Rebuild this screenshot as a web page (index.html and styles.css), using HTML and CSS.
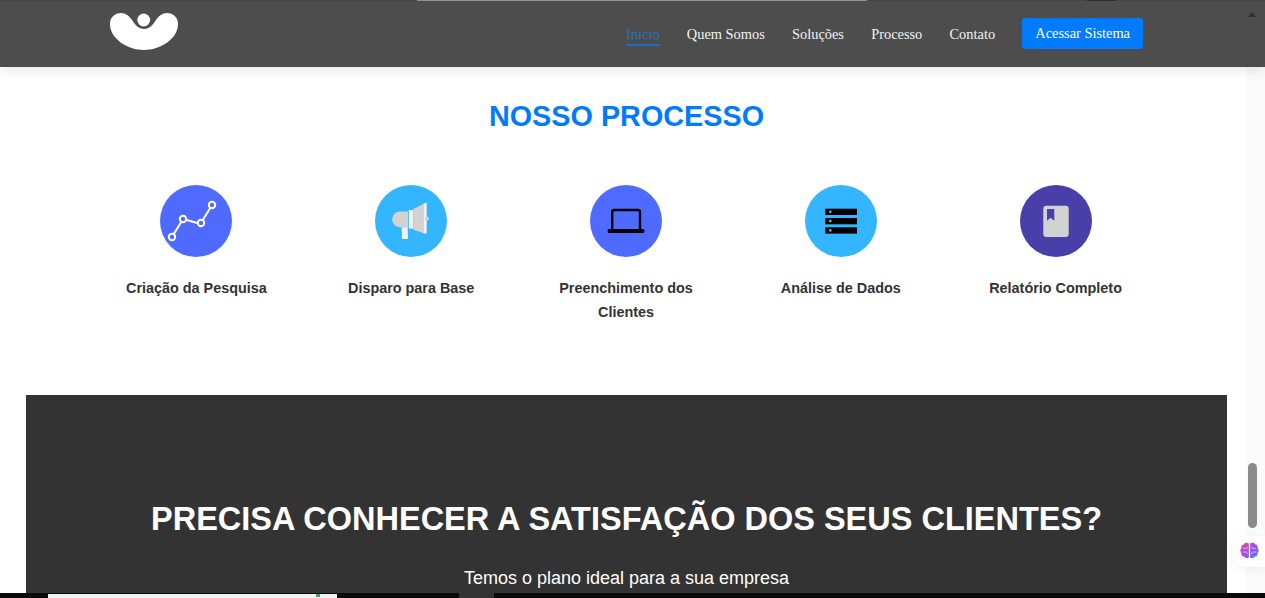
FILE: index.html
```html
<!DOCTYPE html>
<html lang="pt-BR">
<head>
<meta charset="utf-8">
<title>Nosso Processo</title>
<link rel="stylesheet" href="styles.css">
</head>
<body>
<header class="site-header">
  <div class="top-strip"><span class="strip-light"></span><span class="strip-dark"></span></div>
  <div class="header-inner">
    <a class="logo" href="#" aria-label="Logo">
      <svg width="68" height="37" viewBox="0 0 68 37"><circle cx="33.7" cy="7" r="6.4" fill="#fff"/><path fill="#fff" d="M0 11C0 4 5 0 11 0C16 0 19 3 22 7C25 12 29 16 34 16C39 16 43 12 46 7C49 3 52 0 57 0C63 0 68 4 68 11C68 26 50 37 34 37C18 37 0 26 0 11Z"/></svg>
    </a>
    <nav class="nav">
      <a class="nav-link active" href="#">Início</a>
      <a class="nav-link" href="#">Quem Somos</a>
      <a class="nav-link" href="#">Soluções</a>
      <a class="nav-link" href="#">Processo</a>
      <a class="nav-link" href="#">Contato</a>
      <a class="nav-btn" href="#">Acessar Sistema</a>
    </nav>
  </div>
</header>

<main class="page">
  <section class="process">
    <h2 class="process-title">NOSSO PROCESSO</h2>
    <div class="steps">
      <div class="step">
        <div class="step-icon indigo">
          <svg width="72" height="72" viewBox="0 0 72 72" fill="none" stroke="#fff" stroke-width="2"><path d="M13.5 49.5L21.5 36.5M25.8 34.8L38 38.3M42.5 35.5L50.5 22.5"/><circle cx="12" cy="52" r="3.2"/><circle cx="23" cy="34" r="3.2"/><circle cx="41" cy="38" r="3.2"/><circle cx="52" cy="20" r="3.2"/></svg>
        </div>
        <h3 class="step-label">Criação da Pesquisa</h3>
      </div>
      <div class="step">
        <div class="step-icon sky">
          <svg width="72" height="72" viewBox="0 0 72 72"><path fill="#d2d2d2" d="M33 26.5H25A7.8 7.8 0 0 0 25 42.2H33Z"/><rect x="33.8" y="25" width="4.6" height="18.6" fill="#f1f1f1"/><path fill="#d2d2d2" d="M38.4 24L48.4 19V48L38.4 44.8Z"/><path fill="#f1f1f1" d="M48.4 18.5L51.7 17.5V48.5H48.4Z"/><circle cx="52" cy="33.5" r="2" fill="#d2d2d2"/><path fill="#f1f1f1" d="M26.7 42.2H32.7L33 54H27Z"/></svg>
        </div>
        <h3 class="step-label">Disparo para Base</h3>
      </div>
      <div class="step">
        <div class="step-icon indigo">
          <svg width="72" height="72" viewBox="0 0 72 72"><path fill="none" stroke="#000" stroke-width="2.4" d="M22.2 45V27A2 2 0 0 1 24.2 25H48A2 2 0 0 1 50 27V45"/><rect x="17.7" y="44" width="36.6" height="4" rx="1"/></svg>
        </div>
        <h3 class="step-label">Preenchimento dos<br>Clientes</h3>
      </div>
      <div class="step">
        <div class="step-icon sky">
          <svg width="72" height="72" viewBox="0 0 72 72"><rect x="20.3" y="23.7" width="31.7" height="6.3"/><rect x="20.3" y="33" width="31.7" height="6.3"/><rect x="20.3" y="42.3" width="31.7" height="6.3"/><g fill="#5cc4ff"><circle cx="25.3" cy="26.8" r="1.3"/><circle cx="25.3" cy="36.1" r="1.3"/><circle cx="25.3" cy="45.4" r="1.3"/></g></svg>
        </div>
        <h3 class="step-label">Análise de Dados</h3>
      </div>
      <div class="step">
        <div class="step-icon violet">
          <svg width="72" height="72" viewBox="0 0 72 72"><rect x="23.3" y="20.7" width="25.4" height="31.3" rx="3" fill="#d2d2d2"/><path fill="#4a3fa8" d="M27 24H34.3V35.7L30.6 32.8L27 35.7Z"/></svg>
        </div>
        <h3 class="step-label">Relatório Completo</h3>
      </div>
    </div>
  </section>

  <section class="cta">
    <h2 class="cta-title">PRECISA CONHECER A SATISFAÇÃO DOS SEUS CLIENTES?</h2>
    <p class="cta-text">Temos o plano ideal para a sua empresa</p>
  </section>
</main>

<div class="rail">
  <span class="rail-arrow"></span>
  <span class="rail-thumb"></span>
</div>

<div class="brain-widget">
  <svg width="19" height="18" viewBox="0 0 18 17">
    <defs><linearGradient id="brain" x1="0" y1="0" x2="1" y2="1"><stop offset="0" stop-color="#f0468c"/><stop offset=".5" stop-color="#9a4ff0"/><stop offset="1" stop-color="#3f8dff"/></linearGradient></defs>
    <path fill="url(#brain)" d="M8.4 1.5C7 .2 4.6.4 3.8 2C2 2.2.9 3.8 1.4 5.4C0 6.6 0 9.2 1.3 10.3C1 12.2 2.2 13.8 4 13.8C4.8 15.6 7.3 16 8.4 14.6ZM9.6 1.5C11 .2 13.4.4 14.2 2C16 2.2 17.1 3.8 16.6 5.4C18 6.6 18 9.2 16.7 10.3C17 12.2 15.8 13.8 14 13.8C13.2 15.6 10.7 16 9.6 14.6Z"/>
    <path fill="none" stroke="#fff" stroke-opacity=".75" stroke-width=".7" d="M3 6H6.5L7.5 4.5M2.5 9.5H6L7.5 11.5M15 6H11.5L10.5 4.5M15.5 9.5H12L10.5 11.5"/>
  </svg>
</div>

<div class="taskbar">
  <div class="task-window"><span class="task-mark"></span></div>
  <span class="task-tab"></span>
</div>
</body>
</html>
```

FILE: styles.css
```css
* { box-sizing: border-box; }

html, body {
  margin: 0;
  height: 598px;
  overflow: hidden;
  background: #fff;
}

body {
  position: relative;
  font-family: "Liberation Sans", Arial, sans-serif;
  color: #333;
}

.site-header {
  height: 67px;
  background: #4d4d4d;
  box-shadow: 0 3px 12px rgba(0, 0, 0, .1);
  position: relative;
  z-index: 2;
}

.top-strip {
  height: 1px;
  background: #3d474f;
  position: relative;
}

.strip-light {
  position: absolute;
  left: 417px;
  width: 450px;
  top: 0;
  height: 1px;
  background: #8d9296;
}

.strip-dark {
  position: absolute;
  left: 1087px;
  width: 28px;
  top: 0;
  height: 1px;
  background: #2a2d30;
}

.header-inner {
  width: 1253px;
  height: 66px;
  padding: 0 110px;
  display: flex;
  align-items: flex-start;
  justify-content: space-between;
}

.logo {
  display: block;
  margin-top: 12px;
  height: 37px;
}

.nav {
  display: flex;
  align-items: flex-start;
  font-family: "Liberation Serif", "Times New Roman", serif;
  font-size: 14.4px;
  line-height: 20px;
  margin-top: 17px;
}

.nav-link {
  color: #f2f2f2;
  text-decoration: none;
  margin-right: 27.2px;
  margin-top: 6px;
  border-bottom: 2px solid transparent;
}

.nav-link.active {
  color: #2a70bd;
  border-bottom-color: #1f6cc4;
}

.nav-btn {
  display: block;
  height: 31px;
  padding: 5px 13px;
  line-height: 21px;
  background: #007bff;
  color: #fff;
  border-radius: 3px;
  text-decoration: none;
}

.page {
  width: 1253px;
}

.process {
  padding: 32px 0 0;
}

.process-title {
  margin: 0;
  text-align: center;
  color: #007bff;
  font-size: 28.8px;
  line-height: 34px;
  font-weight: 700;
}

.steps {
  width: 1074px;
  margin: 52px 0 0 89px;
  display: grid;
  grid-template-columns: repeat(5, 1fr);
  height: 210px;
}

.step {
  display: flex;
  flex-direction: column;
  align-items: center;
  text-align: center;
}

.step-icon {
  width: 72px;
  height: 72px;
  border-radius: 50%;
}

.step-icon svg {
  display: block;
}

.indigo { background: #4f6bff; }
.sky { background: #33b5ff; }
.violet { background: #4a3fa8; }

.step-label {
  margin: 19px 0 0;
  font-size: 14.4px;
  line-height: 24px;
  font-weight: 700;
  color: #333;
}

.cta {
  margin: 0 26px;
  height: 240px;
  background: #333;
  color: #fff;
  text-align: center;
  padding-top: 104px;
}

.cta-title {
  margin: 0;
  font-size: 32.5px;
  line-height: 40px;
  font-weight: 700;
}

.cta-text {
  margin: 28px 0 0;
  font-size: 18px;
  line-height: 22px;
}

.rail {
  position: absolute;
  top: 67px;
  right: 0;
  bottom: 0;
  width: 19px;
  background: #fafafa;
}

.rail-arrow {
  position: absolute;
  top: -55px;
  left: 2px;
  width: 0;
  height: 0;
  border-left: 4.5px solid transparent;
  border-right: 4.5px solid transparent;
  border-bottom: 5px solid #2f2f2f;
  z-index: 3;
}

.rail-thumb {
  position: absolute;
  top: 396px;
  left: 2px;
  width: 9px;
  height: 65px;
  border-radius: 5px;
  background: #8a8a8a;
}

.brain-widget {
  position: absolute;
  left: 1232px;
  top: 536px;
  width: 33px;
  height: 31px;
  padding: 6px 0 0 8px;
  background: #fff;
  border-radius: 16px 0 0 16px;
  box-shadow: 0 2px 8px rgba(0, 0, 0, .06);
}

.brain-widget svg {
  display: block;
}

.taskbar {
  position: absolute;
  left: 0;
  right: 0;
  bottom: 0;
  height: 5px;
  background: #0a0a0a;
  z-index: 4;
}

.task-window {
  position: absolute;
  left: 48px;
  top: 1px;
  width: 289px;
  height: 4px;
  background: #f2f4f3;
}

.task-mark {
  position: absolute;
  left: 268px;
  top: 0;
  width: 4px;
  height: 3px;
  background: #3da56a;
}

.task-tab {
  position: absolute;
  left: 459px;
  top: 0;
  width: 35px;
  height: 5px;
  background: #333;
}
```
